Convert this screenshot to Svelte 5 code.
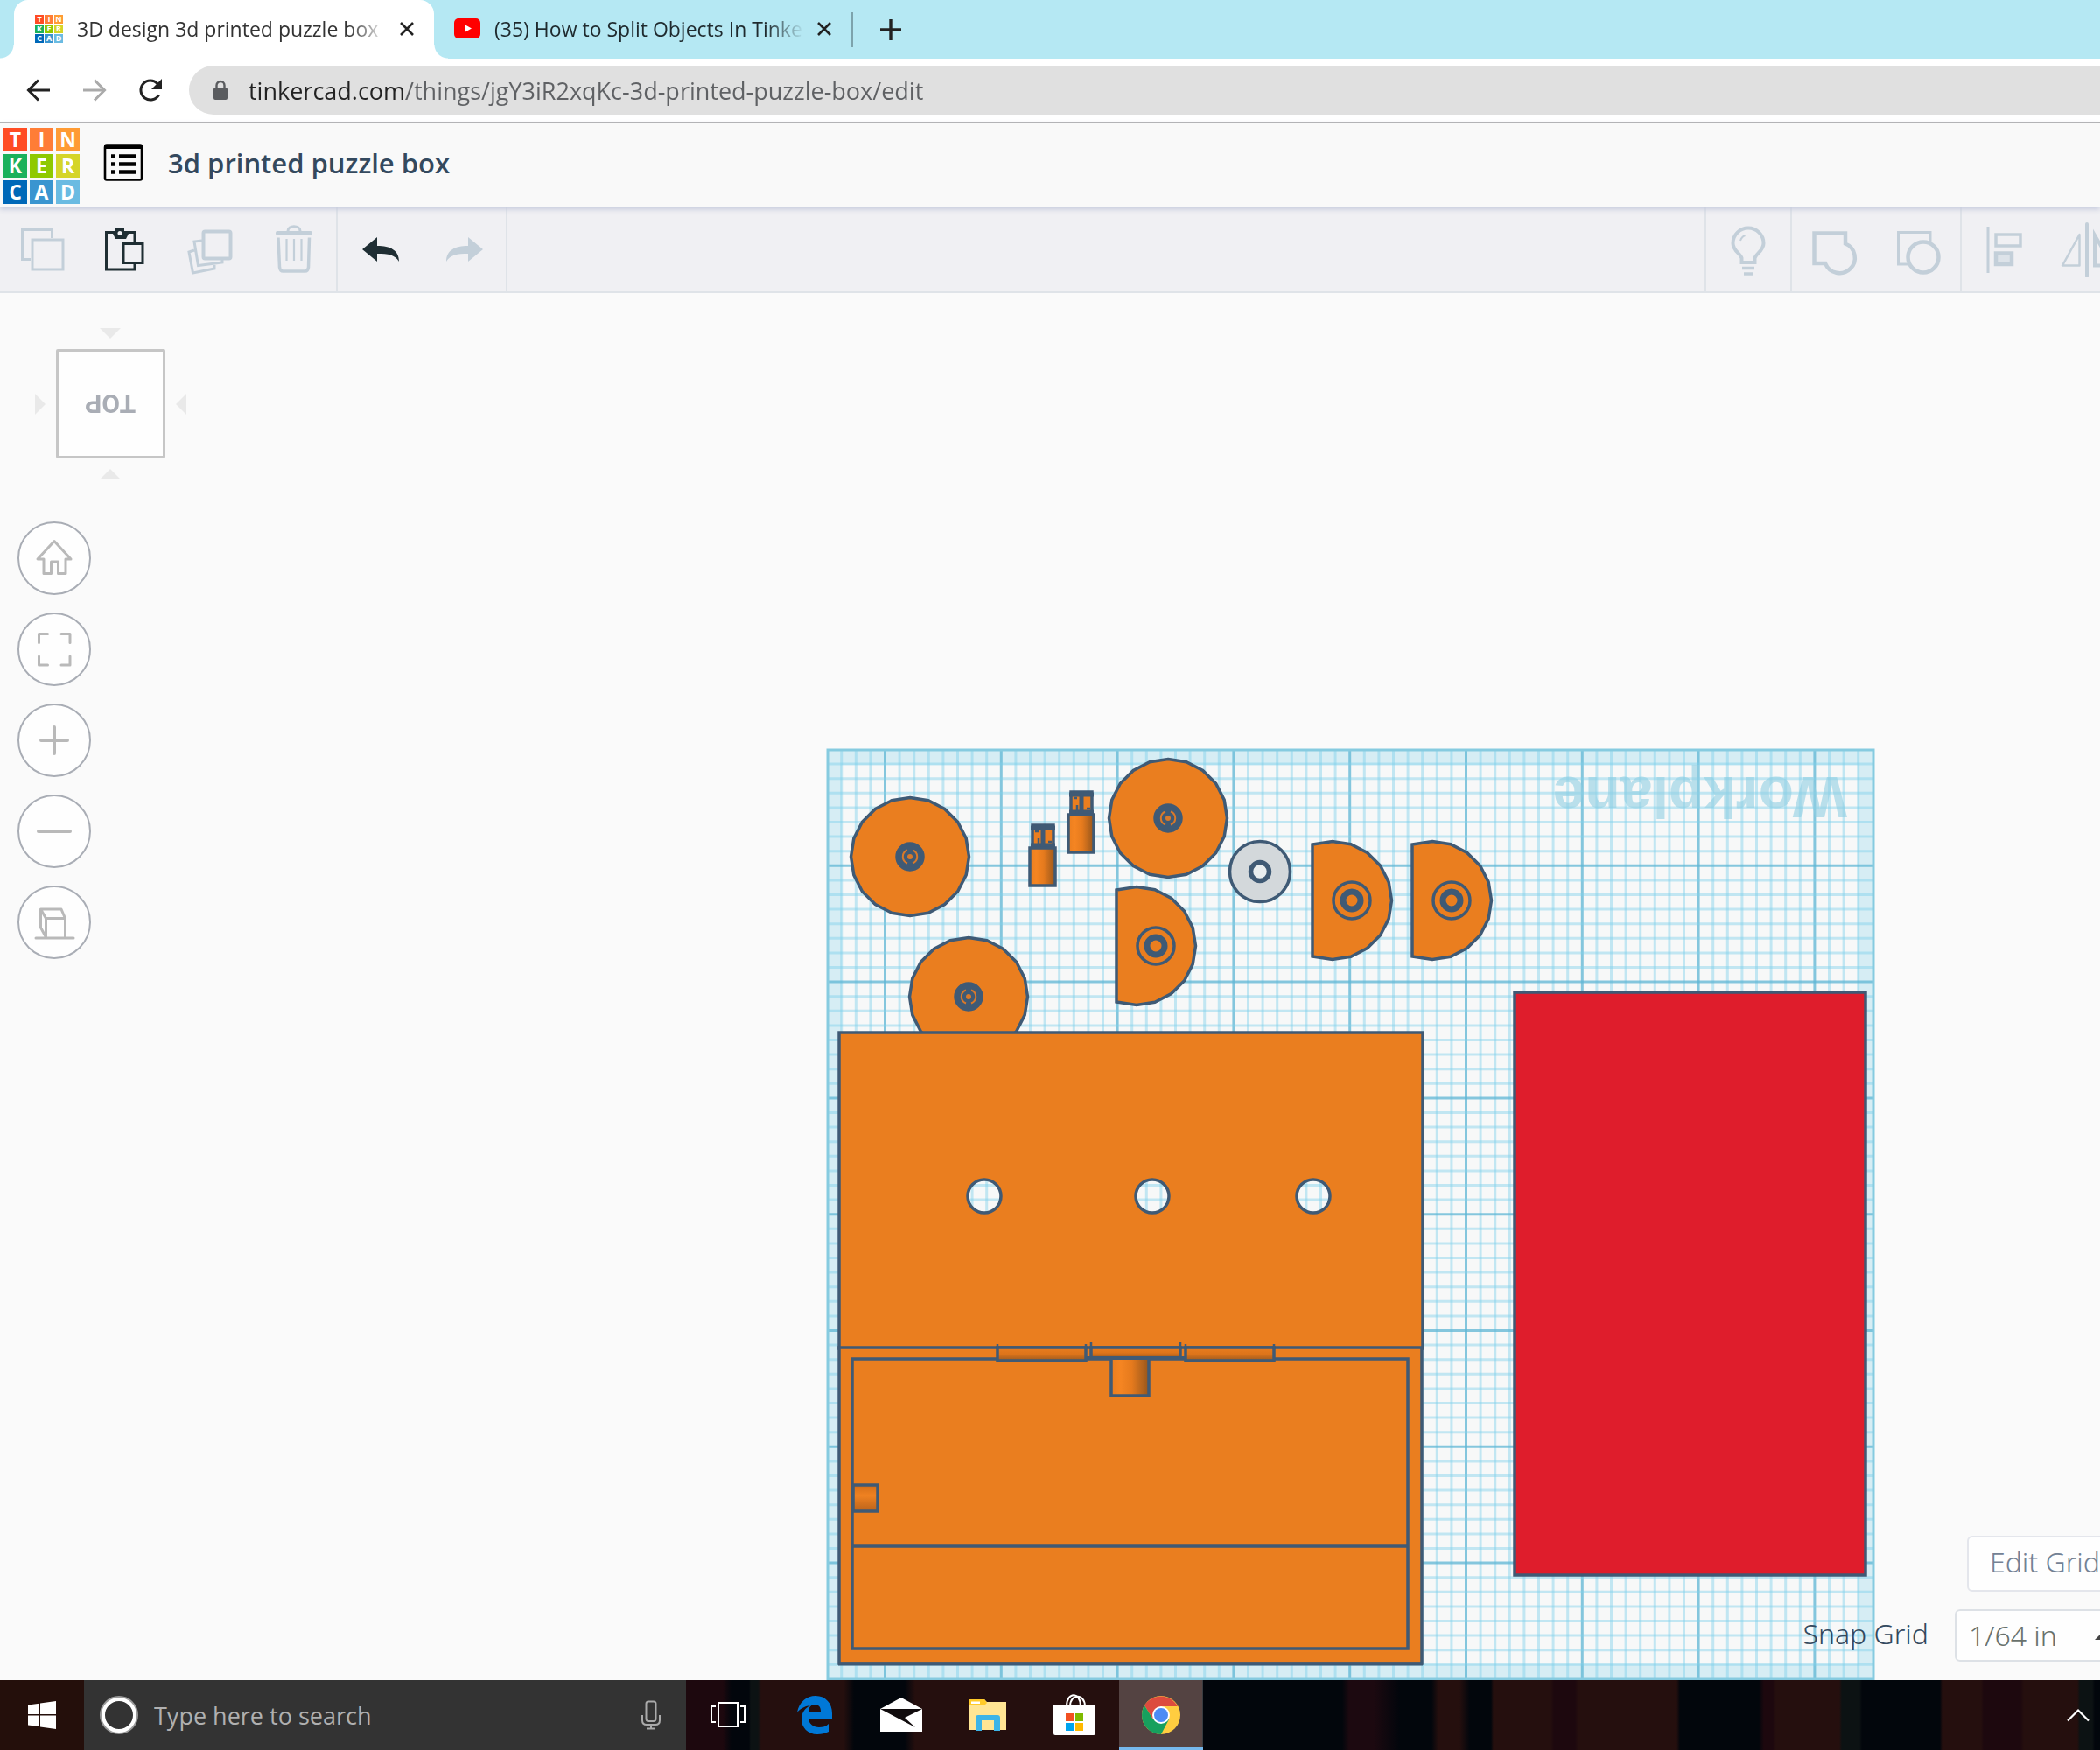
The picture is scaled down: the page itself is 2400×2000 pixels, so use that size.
<script>
  let url = 'tinkercad.com/things/jgY3iR2xqKc-3d-printed-puzzle-box/edit';
  let search = '';
  let snap = '1/64 in';

  const tiles = [
    ['T', '#ff4c24'], ['I', '#ff7d36'], ['N', '#ff9b34'],
    ['K', '#1bb15b'], ['E', '#8fc900'], ['R', '#d5d529'],
    ['C', '#0068b8'], ['A', '#3a95d0'], ['D', '#6abbe2'],
  ];

  // workplane, in canvas units
  const plane = { left: 945, top: 856, right: 2142, bottom: 1920 };
  const step = 16.6;

  function lines(from, to, first) {
    const out = [];
    for (let i = 1; from + i * step < to - 4; i++) {
      out.push({ at: from + i * step, major: (i - first) % 8 === 0 });
    }
    return out;
  }

  const cols = lines(945.1, plane.right, 4);
  const rows = lines(856.5, plane.bottom, 8);

  // 20-sided disc, optionally cut flat on the left
  function disc(cx, cy, r, cut) {
    const pts = [];
    for (let i = 0; i < 20; i++) {
      const a = (i * Math.PI) / 10;
      const x = cx + r * Math.sin(a);
      const y = cy - r * Math.cos(a);
      if (cut === undefined || x > cx - cut + 5) pts.push([x, y]);
      else if (i === 11) pts.push([cx - cut, cy + r * 0.95]);
      else if (i === 19) pts.push([cx - cut, cy - r * 0.95]);
    }
    return pts.map((p) => p.map((n) => n.toFixed(1)).join(',')).join(' ');
  }

  const wheels = [[1040, 979], [1335, 935], [1107, 1139]];
  const halves = [[1523, 1029], [1637, 1029], [1299, 1081]];
  const pins = [[1220, 902], [1176, 940]];
  const holes = [1125, 1317, 1501];
</script>

{#snippet logo(small)}
  <span class="logo" class:small>
    {#each tiles as [letter, color]}
      <b style="background: {color}">{letter}</b>
    {/each}
  </span>
{/snippet}

<div class="screen">
  <div class="tabs">
    <div class="tab active">
      {@render logo(true)}
      <span class="tab-title">3D design 3d printed puzzle box</span>
      <button class="close" aria-label="Close tab"><svg width="18" height="18" viewBox="0 0 18 18"><path d="M2 2l14 14M16 2L2 16" stroke="#222" stroke-width="2.6" /></svg></button>
    </div>
    <div class="tab">
      <svg class="yt" width="30" height="24" viewBox="0 0 30 24"><rect width="30" height="23" rx="5" fill="#f00" /><path d="M12 7l8 4.5-8 4.5z" fill="#fff" /></svg>
      <span class="tab-title">(35) How to Split Objects In Tinke</span>
      <button class="close" aria-label="Close tab"><svg width="18" height="18" viewBox="0 0 18 18"><path d="M2 2l14 14M16 2L2 16" stroke="#222" stroke-width="2.6" /></svg></button>
    </div>
    <span class="tab-line"></span>
    <button class="new-tab" aria-label="New tab"><svg width="24" height="24" viewBox="0 0 24 24"><path d="M12 0v24M0 12h24" stroke="#222" stroke-width="3.4" /></svg></button>
  </div>

  <div class="nav">
    <button aria-label="Back"><svg width="32" height="32" viewBox="0 0 32 32"><path d="M29 16H5M16 4.5L4.5 16 16 27.5" fill="none" stroke="#222" stroke-width="3" /></svg></button>
    <button aria-label="Forward"><svg width="32" height="32" viewBox="0 0 32 32"><path d="M3 16h24M16 4.5L27.5 16 16 27.5" fill="none" stroke="#aaa" stroke-width="3" /></svg></button>
    <button aria-label="Reload"><svg width="32" height="32" viewBox="0 0 32 32"><path d="M25.5 21.5A11 11 0 1 1 24 8.5" fill="none" stroke="#222" stroke-width="3" /><path d="M29 3v12H17z" fill="#222" /></svg></button>
    <div class="address">
      <svg width="18" height="24" viewBox="0 0 18 24"><rect x="1" y="9" width="16" height="14" rx="2" fill="#5a5c5f" /><path d="M4.5 10V6.5a4.5 4.5 0 0 1 9 0V10" fill="none" stroke="#5a5c5f" stroke-width="2.4" /></svg>
      <input aria-label="Address" bind:value={url} />
    </div>
  </div>

  <header>
    {@render logo(false)}
    <button class="designs" aria-label="Designs">
      <svg width="46" height="44" viewBox="0 0 46 44">
        <rect x="2" y="2.5" width="42" height="39" rx="2" fill="none" stroke="#000" stroke-width="2.6" />
        <path d="M1 4h44" stroke="#000" stroke-width="4" />
        <path d="M9 14.5h5M9 23.5h5M9 32.5h5M18 14.5h19M18 23.5h19M18 32.5h19" stroke="#000" stroke-width="4.6" />
      </svg>
    </button>
    <h1>3d printed puzzle box</h1>
  </header>

  <div class="toolbar">
    <div class="group">
      <button aria-label="Copy"><svg class="off" viewBox="0 0 64 64"><path d="M43.5 19V9.5H9.5V43.5H19" /><rect x="21" y="21" width="35" height="34" /></svg></button>
      <button aria-label="Paste">
        <svg class="on" viewBox="0 0 64 64"><path d="M42 25V12.5H9.5V55H42V49" /><rect x="29" y="25.5" width="22" height="22" /><path d="M16 12h4V8h10v4h6l-4 8H20z" fill="#1f2e33" stroke="none" /><circle cx="25" cy="13.5" r="2.5" fill="#f0f0f3" stroke="none" /></svg>
      </button>
      <button aria-label="Duplicate">
        <svg class="off" viewBox="0 0 64 64"><rect x="24.5" y="11.5" width="31" height="31" rx="2" stroke-width="4" /><path d="M23 22l-9 1 4.500 27.500L46 47v-4M14 33l-6 2 4.500 24L37 54v-4" /></svg>
      </button>
      <button aria-label="Delete">
        <svg class="off" viewBox="0 0 64 64"><path d="M25 11c0-7 14-7 14 0" /><rect x="11" y="11" width="42" height="5" rx="2" fill="#c3cfd9" stroke="none" /><path d="M14 18.5l1.5 34q.5 4.500 4 4.500h25q3.500 0 4-4.500l1-34" stroke-width="3.5" /><path d="M23.5 20v25M32 20v25M40.5 20v25" stroke-width="2.2" /></svg>
      </button>
    </div>
    <div class="group">
      <button aria-label="Undo"><svg class="on" viewBox="-8 -8 64 64"><path d="M4 24L21 10v10C36 20 46 25 46 38 41 30 34 29 21 29v9z" fill="#1f2e33" stroke="none" /></svg></button>
      <button aria-label="Redo"><svg class="off" viewBox="-8 -8 64 64"><path d="M46 24L29 10v10C14 20 4 25 4 38 9 30 16 29 29 29v9z" fill="#c3cfd9" stroke="none" /></svg></button>
    </div>
    <div class="tools">
      <div class="group">
        <button aria-label="Show all"><svg class="off" viewBox="0 0 64 64"><path d="M24.5 47v-5c-1-5-10-8-10-17a17.5 17.5 0 0 1 35 0c0 9-9 12-10 17v5z" stroke-width="4" /><path d="M23 22q1.5-4.500 5.500-6" stroke-width="2" /><path d="M25 53.5h14M27 60h10" stroke-width="3.5" /></svg></button>
      </div>
      <div class="group">
        <button aria-label="Group"><svg class="off" viewBox="0 0 64 64"><path d="M22 48H9.5V13.5H45v12A17.5 17.5 0 1 1 22 48z" stroke-width="4.5" /></svg></button>
        <button aria-label="Ungroup"><svg class="off" viewBox="0 0 64 64"><path d="M46 25V12.5H9.5V49H22" /><circle cx="38" cy="41" r="17.5" stroke-width="4.5" /></svg></button>
      </div>
      <div class="group">
        <button aria-label="Align"><svg class="off" viewBox="0 0 64 64"><path d="M14 6v53" /><rect x="23" y="15" width="28" height="13" stroke-width="3.5" /><rect x="23" y="36.5" width="18" height="12.5" stroke-width="4.5" fill="#dde3e9" /></svg></button>
        <button aria-label="Mirror"><svg class="off" viewBox="0 0 64 64"><path d="M31 3v60" stroke-width="4" stroke-linecap="round" /><path d="M3 50.5L22.5 15v35.5z" stroke-width="2.5" stroke-linejoin="round" /><path d="M60 50.5L40 16v34.5z" stroke-width="4" /></svg></button>
      </div>
    </div>
  </div>

  <main>
    <svg class="canvas" viewBox="0 335 2400 1585" preserveAspectRatio="xMinYMin slice">
      <defs>
        <linearGradient id="round-x"><stop offset="0" stop-color="#ea7e1f" /><stop offset=".25" stop-color="#f58522" /><stop offset=".55" stop-color="#e57a1d" /><stop offset="1" stop-color="#96561c" /></linearGradient>
        <linearGradient id="round-y" x2="0" y2="1"><stop offset="0" stop-color="#e87d1f" /><stop offset=".5" stop-color="#dd741a" /><stop offset="1" stop-color="#9c5a1f" /></linearGradient>
        <linearGradient id="knob" x2="0" y2="1"><stop offset="0" stop-color="#d26d18" /><stop offset=".4" stop-color="#f08221" /><stop offset="1" stop-color="#ba631b" /></linearGradient>
        <mask id="drilled" maskUnits="userSpaceOnUse" x="950" y="1170" width="690" height="380">
          <rect x="950" y="1170" width="690" height="380" fill="#fff" stroke="none" />
          {#each holes as x}<circle cx={x} cy="1367" r="19" fill="#000" />{/each}
        </mask>
      </defs>

      <rect x={plane.left} y={plane.top} width={plane.right - plane.left} height={plane.bottom - plane.top} fill="#f7f8f8" />
      <path d="M945 856H2142V1920H945zM962 874V1902H2123V874z" fill-rule="evenodd" fill="#d6edf4" />
      {#each cols as c}
        <path class={c.major ? 'major' : 'minor'} d="M{c.at} {plane.top}V{plane.bottom}" />
      {/each}
      {#each rows as r}
        <path class={r.major ? 'major' : 'minor'} d="M{plane.left} {r.at}H{plane.right}" />
      {/each}
      <rect x="946" y="857" width="1195" height="1062" fill="none" stroke="#86cbe0" stroke-width="3" />
      <text class="plane-name" x="2111" y="888" transform="rotate(180 2111 888)">Workplane</text>

      <g class="solid">
        {#each wheels as [x, y]}
          <polygon points={disc(x, y, 67.5)} />
          <circle class="dark" cx={x} cy={y} r="15" />
          <path class="slot" d="M{x - 3} {y - 7.5}A8 8 0 0 0 {x - 3} {y + 7.5}M{x + 3} {y - 7.5}A8 8 0 0 1 {x + 3} {y + 7.5}" />
          <circle class="dot" cx={x} cy={y} r="3" />
        {/each}
        {#each halves as [x, y]}
          <polygon points={disc(x, y, 67.5, 23)} />
          <circle cx={x + 22} cy={y} r="21" />
          <circle cx={x + 22} cy={y} r="10" stroke-width="7" />
        {/each}
        {#each pins as [x, y]}
          <rect x={x + 4} y={y + 3} width="24" height="30" />
          <path d="M{x + 2} {y + 6}h28M{x + 2} {y + 26}h28" stroke-width="5" />
          <path d="M{x + 16} {y + 2}v26" stroke-width="5" />
          <path d="M{x + 11} {y + 18}v10M{x + 7} {y + 10}h4M{x + 22} {y + 22}h4" stroke-width="2.5" />
          <rect x={x + 1} y={y + 29} width="29" height="43" fill="url(#round-x)" />
        {/each}
        <circle cx="1440" cy="996" r="34.5" fill="#d3d8db" />
        <circle cx="1440" cy="996" r="10.5" fill="#e9eef0" stroke-width="5.5" />

        <g mask="url(#drilled)"><rect x="959" y="1180" width="667" height="361" /></g>
        {#each holes as x}<circle cx={x} cy="1367" r="19" fill="none" />{/each}
        <rect x="959" y="1540" width="666" height="361" />
        <path d="M958 1901.5H1626" stroke-width="4" />
        <rect x="974" y="1553" width="635" height="331" />
        <path d="M974 1767H1609" />
        <rect x="975" y="1697" width="28" height="30" fill="url(#knob)" />
        <rect x="1270" y="1552" width="43" height="43" fill="url(#round-x)" />
        <rect x="1140" y="1540" width="101" height="15" fill="url(#round-y)" />
        <rect x="1247" y="1540" width="102" height="12" fill="url(#round-y)" />
        <rect x="1355" y="1540" width="101" height="15" fill="url(#round-y)" />
        <path d="M1140 1536v6M1241 1536v6M1247 1534v8M1349 1534v8M1355 1536v6M1456 1536v6" stroke-width="2.5" />
        <path d="M1241 1552H1355" stroke-width="4" />
        <rect x="1731" y="1134" width="401" height="666" fill="#df1d2c" />
      </g>
    </svg>

    <div class="view">
      <div class="cube">
        <svg width="24" height="12" viewBox="0 0 24 12"><path d="M0 0h24L12 12z" /></svg>
        <div class="middle">
          <svg width="12" height="24" viewBox="0 0 12 24"><path d="M0 0v24l12-12z" /></svg>
          <button class="face"><span>TOP</span></button>
          <svg width="12" height="24" viewBox="0 0 12 24"><path d="M12 0v24L0 12z" /></svg>
        </div>
        <svg width="24" height="12" viewBox="0 0 24 12"><path d="M0 12h24L12 0z" /></svg>
      </div>
      <button class="round" aria-label="Home view"><svg viewBox="0 0 84 84"><path d="M42 22.5L23 43h7v16.5h8.500V46h8v13.500H55V43h6z" /></svg></button>
      <button class="round" aria-label="Fit all in view"><svg viewBox="0 0 84 84"><path d="M34.5 24.5h-10v10M50 24.5h10v10M34.5 60h-10V50M50 60h10V50" /></svg></button>
      <button class="round" aria-label="Zoom in"><svg viewBox="0 0 84 84"><path d="M27 42h30M42 27v30" stroke-width="4" /></svg></button>
      <button class="round" aria-label="Zoom out"><svg viewBox="0 0 84 84"><path d="M24 42h36" stroke-width="4" /></svg></button>
      <button class="round" aria-label="Orthographic view"><svg viewBox="0 0 84 84"><path d="M21 60h43M32.5 59V37.5H54.5V59M26.5 27H50l4.500 10.500M26.5 27l6 10.500M26.5 27v21l6 11" /></svg></button>
    </div>

    <div class="grid-controls">
      <button class="edit-grid">Edit Grid</button>
      <div class="snap">
        <label for="snap">Snap Grid</label>
        <span class="select">
          <select id="snap" bind:value={snap}>
            <option>1/64 in</option>
            <option>1/32 in</option>
            <option>1/16 in</option>
          </select>
          <svg width="20" height="10" viewBox="0 0 20 10"><path d="M0 10L10 0l10 10z" fill="#444" /></svg>
        </span>
      </div>
    </div>
  </main>

  <footer>
    <button class="start" aria-label="Start"><svg width="32" height="32" viewBox="0 0 32 32"><path d="M0 4.5L13 2.7V15H0zM14 2.5L32 0v15H14zM0 16.5h13V29L0 27.5zM14 16.5h18V32l-18-2.5z" fill="#fff" /></svg></button>
    <div class="search">
      <svg width="46" height="46" viewBox="0 0 46 46"><circle cx="23" cy="23" r="20.5" fill="none" stroke="#9a9a9a" stroke-width="3" /><circle cx="23" cy="23" r="18" fill="none" stroke="#fff" stroke-width="4" /></svg>
      <input type="text" aria-label="Search" placeholder="Type here to search" bind:value={search} />
      <svg class="mic" width="24" height="34" viewBox="0 0 24 34"><path d="M9 1.5h6q2.5 0 2.5 2.5v17q0 3-2.5 3H9q-2.5 0-2.5-3V4q0-2.5 2.5-2.5zM2 17v6q0 5 5 5h10q5 0 5-5v-6M12 28v4M7 32.5h10" fill="none" stroke="#aaa" stroke-width="2" /></svg>
    </div>
    <div class="apps">
      <button aria-label="Task view"><svg width="40" height="30" viewBox="0 0 40 30"><path d="M9 1h22v27H9zM6 5H1v18h5M34 5h5v18h-5" fill="none" stroke="#fff" stroke-width="2" /></svg></button>
      <button aria-label="Edge"><svg width="40" height="44" viewBox="0 0 40 44"><path d="M0 19C2 7 11 0 21 0c12 0 19 9 19 20v6H13c0 6 6 10 12 10 4 0 8-1 11-4v9c-4 2-8 3-13 3C12 44 5 36 5 27c0-8 4-13 10-16C8 12 3 15 0 19zM13 18h14c0-6-3-8-7-8s-7 3-7 8z" fill="#0078d7" /></svg></button>
      <button aria-label="Mail"><svg width="48" height="40" viewBox="0 0 48 40"><path d="M0 13L24 0l24 13v26H0z" fill="#fff" /><path d="M0 13h48L28 23l12 11z" fill="#100b0d" /></svg></button>
      <button aria-label="File Explorer"><svg width="42" height="38" viewBox="0 0 42 38"><path d="M0 1h17l3 3h22v32H0z" fill="#ffe593" /><path d="M0 1h17l3 4-3 3H0z" fill="#ffca28" /><path d="M2 3.5h10V6H2z" fill="#fff" /><path d="M7 37V22q0-3 3-3h22q3 0 3 3v15h-7V25H14v12z" fill="#3cb4e7" /></svg></button>
      <button aria-label="Store"><svg width="48" height="48" viewBox="0 0 48 48"><path d="M15 14C15-3 31-3 31 14M19 14C19-1 36-1 36 14" fill="none" stroke="#fff" stroke-width="2" /><path d="M0 13h48v32q0 2-2 2H2q-2 0-2-2z" fill="#fff" /><path d="M14 22h9v9h-9z" fill="#f25022" /><path d="M25 22h9v9h-9z" fill="#7fba00" /><path d="M14 33h9v9h-9z" fill="#00a4ef" /><path d="M25 33h9v9h-9z" fill="#ffb900" /></svg></button>
      <button class="running" aria-label="Chrome">
        <svg width="44" height="44" viewBox="0 0 44 44">
          <circle cx="22" cy="22" r="22" fill="#ffcd40" />
          <path d="M3 11A22 22 0 0 1 41 12H22L13 27z" fill="#dd4b3e" />
          <path d="M3 11A22 22 0 0 0 22 44L31 27H13z" fill="#17a05e" />
          <circle cx="22" cy="22" r="10" fill="#fff" /><circle cx="22" cy="22" r="8" fill="#4c8bf5" />
        </svg>
      </button>
    </div>
    <button class="tray" aria-label="Show hidden icons"><svg width="28" height="16" viewBox="0 0 28 16"><path d="M2 14.5L14 2.5l12 12" fill="none" stroke="#fff" stroke-width="2.2" /></svg></button>
  </footer>
</div>

<style>
  :global(body) {
    margin: 0;
    overflow: hidden;
  }
  .screen {
    display: flex;
    flex-direction: column;
    height: 100vh;
    background: #fafafa;
    font-family: "Open Sans", "Noto Sans", sans-serif;
  }
  button {
    border: 0;
    padding: 0;
    background: none;
    font: inherit;
    display: flex;
    align-items: center;
    justify-content: center;
  }
  input, select {
    border: 0;
    padding: 0;
    outline: 0;
    background: none;
    font: inherit;
  }

  .logo {
    flex: none;
    display: grid;
    grid-template-columns: repeat(3, 27px);
    grid-auto-rows: 27px;
    gap: 3px;
  }
  .logo b {
    color: #fff;
    font-size: 23px;
    line-height: 27px;
    text-align: center;
  }
  .logo.small {
    grid-template-columns: repeat(3, 10px);
    grid-auto-rows: 10px;
    gap: 1px;
  }
  .logo.small b {
    font-size: 9px;
    line-height: 10px;
  }

  .tabs {
    flex: none;
    display: flex;
    align-items: center;
    box-sizing: border-box;
    height: 67px;
    padding-left: 16px;
    background: #b5e8f3;
    overflow: hidden;
  }
  .tab {
    display: flex;
    align-items: center;
    box-sizing: border-box;
    width: 477px;
    height: 67px;
    padding: 0 22px 2px 23px;
    color: #1f2a2e;
  }
  .tab.active {
    width: 480px;
    padding-left: 24px;
    background: #fff;
    border-radius: 16px 16px 0 0;
    color: #333;
    position: relative;
  }
  .tab.active::before, .tab.active::after {
    content: '';
    position: absolute;
    bottom: 0;
    width: 16px;
    height: 16px;
  }
  .tab.active::before {
    left: -16px;
    background: radial-gradient(circle at 0 0, #b5e8f3 15px, #fff 16px);
  }
  .tab.active::after {
    right: -16px;
    background: radial-gradient(circle at 100% 0, #b5e8f3 15px, #fff 16px);
  }
  .tab-title {
    flex: 1;
    margin: 0 12px 0 16px;
    font-size: 23px;
    line-height: 32px;
    white-space: nowrap;
    mask-image: linear-gradient(90deg, #000 calc(100% - 46px), transparent calc(100% - 2px));
  }
  .close {
    flex: none;
  }
  .yt {
    flex: none;
  }
  .tab-line {
    width: 2px;
    height: 40px;
    background: #7da3ac;
  }
  .new-tab {
    margin-left: 31px;
  }

  .nav {
    flex: none;
    display: flex;
    align-items: center;
    box-sizing: border-box;
    height: 74px;
    padding-left: 12px;
    background: #fff;
    border-bottom: 2px solid #b0b0b0;
  }
  .nav button {
    width: 64px;
    height: 64px;
  }
  .address {
    flex: 1;
    display: flex;
    align-items: center;
    height: 56px;
    margin-left: 12px;
    padding-left: 27px;
    border-radius: 28px 0 0 28px;
    background: #e0e0e0;
  }
  .address input {
    flex: 1;
    margin-left: 23px;
    font-size: 27px;
    color: transparent;
    background: linear-gradient(90deg, #222 180px, #5f6164 180px);
    background-clip: text;
  }

  header {
    flex: none;
    display: flex;
    align-items: center;
    height: 96px;
    padding-left: 4px;
    background: #f9f9f9;
    position: relative;
    box-shadow: 0 2px 6px #c4c9dc;
  }
  .designs {
    margin: 0 0 6px 27px;
  }
  h1 {
    margin: 0 0 6px 28px;
    font-size: 31px;
    line-height: 44px;
    font-weight: 600;
    color: #34495e;
  }

  .toolbar {
    flex: none;
    display: flex;
    height: 96px;
    background: #f0f0f3;
    border-bottom: 2px solid #dfe3e8;
    overflow: hidden;
  }
  .group {
    display: flex;
    border-right: 2px solid #dfe3e8;
  }
  .group button {
    width: 96px;
    height: 96px;
  }
  .group svg {
    width: 64px;
    height: 64px;
    fill: none;
    stroke-width: 3;
  }
  .off {
    stroke: #c3cfd9;
  }
  .on {
    stroke: #1f2e33;
  }
  .tools {
    display: flex;
    flex: 0 0 452px;
    min-width: 0;
    max-width: 452px;
    margin-left: auto;
  }
  .tools .group {
    flex: none;
    border-right: 0;
    border-left: 2px solid #dfe3e8;
  }

  main {
    flex: 1;
    min-height: 0;
    position: relative;
    overflow: hidden;
  }
  .canvas {
    position: absolute;
    inset: 0;
    width: 100%;
    height: 100%;
  }
  .minor {
    stroke: #7fd0ea;
    stroke-opacity: 0.45;
    stroke-width: 3;
  }
  .major {
    stroke: #5db6d4;
    stroke-opacity: 0.75;
    stroke-width: 3;
  }
  .plane-name {
    font: bold 66px "Liberation Sans", Arial, sans-serif;
    fill: #8fcfe2;
    fill-opacity: 0.6;
  }
  .solid {
    fill: #ea7e1f;
    stroke: #3f5a75;
    stroke-width: 3.5;
  }
  .solid .dark {
    fill: #3f5a75;
  }
  .solid .slot {
    fill: none;
    stroke: #d9792a;
    stroke-width: 2;
  }
  .solid .dot {
    stroke: none;
    fill: #d9792a;
  }

  .view {
    position: relative;
    width: 252px;
    padding-top: 40px;
    display: flex;
    flex-direction: column;
    gap: 20px;
  }
  .cube {
    display: flex;
    flex-direction: column;
    align-items: center;
    gap: 12px;
    margin-bottom: 28px;
  }
  .cube svg {
    fill: #e9e9e9;
  }
  .middle {
    display: flex;
    align-items: center;
    gap: 12px;
  }
  .face {
    box-sizing: border-box;
    width: 125px;
    height: 125px;
    border: 3px solid #c6c6c6;
    border-radius: 2px;
    background: #fefefe;
    color: #a9adb5;
    font: bold 30px Roboto, sans-serif;
  }
  .face span {
    transform: rotate(180deg);
  }
  .round {
    width: 84px;
    height: 84px;
    margin-left: 20px;
    box-sizing: border-box;
    border: 2px solid #a9adb5;
    border-radius: 50%;
    background: #fefefe;
  }
  .round svg {
    flex: none;
    width: 84px;
    height: 84px;
    fill: none;
    stroke: #b9b9b9;
    stroke-width: 3;
    stroke-linecap: round;
    stroke-linejoin: round;
  }

  .grid-controls {
    position: absolute;
    right: -34px;
    bottom: 21px;
    display: flex;
    flex-direction: column;
    align-items: flex-end;
    gap: 20px;
    font-family: "Noto Sans", "Open Sans", sans-serif;
    font-size: 32px;
    line-height: 40px;
    font-weight: 300;
  }
  .edit-grid {
    box-sizing: border-box;
    width: 186px;
    height: 64px;
    justify-content: flex-start;
    padding: 0 0 4px 24px;
    border: 2px solid #e4e6ec;
    border-radius: 6px;
    background: #fefefe;
    color: #738194;
  }
  .snap {
    display: flex;
    align-items: center;
  }
  .snap label {
    margin: 0 30px 4px 0;
    color: #34495e;
  }
  .select {
    display: flex;
    align-items: center;
    box-sizing: border-box;
    width: 200px;
    height: 60px;
    padding-left: 14px;
    border: 2px solid #dde1e6;
    border-radius: 6px;
    background: #fefefe;
  }
  select {
    appearance: none;
    width: 144px;
    color: #68716c;
  }

  footer {
    flex: none;
    display: flex;
    height: 80px;
    background: linear-gradient(90deg, #240f0b 96px, #1d080e 784px 826px, #02060c 836px 856px, #0c1213 858px 866px,
      #250f0e 870px 964px, #02060c 976px 1034px, #250f0e 1046px 1374px, #02060c 1374px 1534px, #1c0910 1542px 1570px,
      #02060c 1600px 1636px, #250f0e 1644px 1668px, #02060c 1680px 1704px, #250f0e 1707px 1772px, #1d080e 1776px 1800px,
      #250f0e 1804px 1916px, #02060c 1920px 2010px, #1d080e 2016px 2026px, #250f0e 2030px 2102px, #0c1213 2105px 2125px,
      #02060c 2128px 2217px, #250f0e 2220px 2264px, #1d080e 2267px 2309px, #250f0e 2313px 2374px, #0c1213 2377px 2391px,
      #02060c 2394px);
  }
  .start {
    width: 96px;
  }
  .search {
    display: flex;
    align-items: center;
    box-sizing: border-box;
    width: 688px;
    padding: 0 28px 0 17px;
    background: #333;
  }
  .search input {
    flex: 1;
    margin-left: 17px;
    font-size: 27px;
    color: #fff;
  }
  .search input::placeholder {
    color: #b0b0b0;
    opacity: 1;
  }
  .apps {
    display: flex;
    gap: 3px;
  }
  .apps button {
    box-sizing: border-box;
    width: 96px;
    height: 80px;
  }
  .apps .running {
    background: rgba(255, 255, 255, 0.22);
    border-top: 4px solid transparent;
    border-bottom: 4px solid #76b9ed;
  }
  .tray {
    width: 50px;
    margin-left: auto;
  }
</style>
